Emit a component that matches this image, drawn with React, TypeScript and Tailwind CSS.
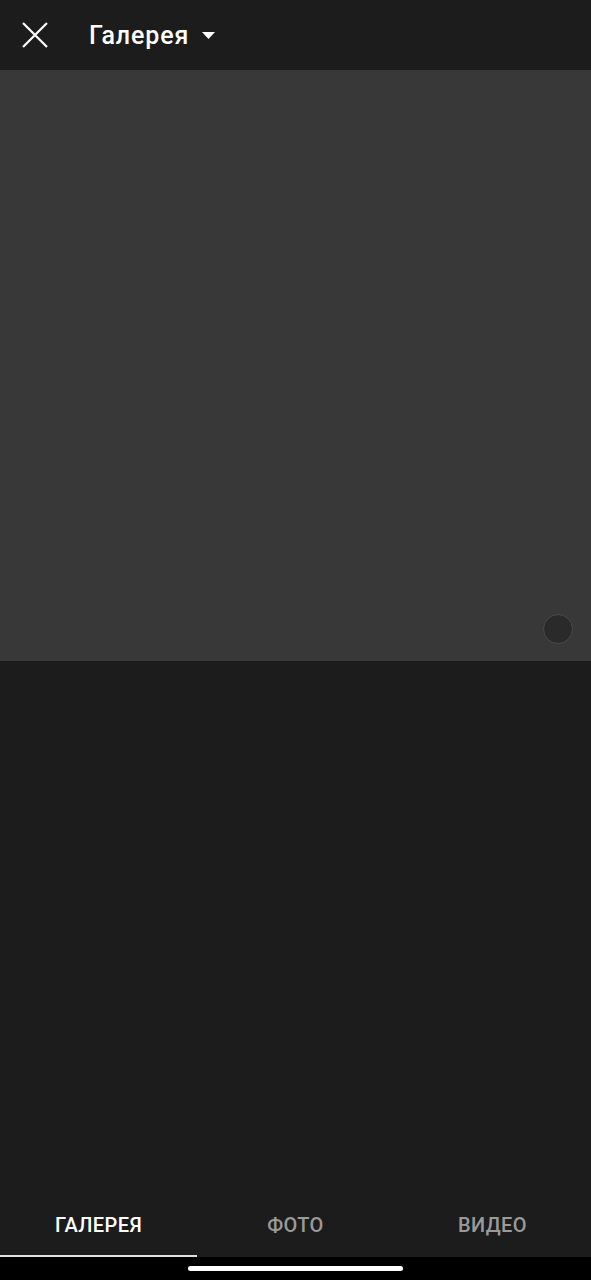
import React from 'react';

const tabs = ['ГАЛЕРЕЯ', 'ФОТО', 'ВИДЕО'];

export default function App() {
  return (
    <div className="flex h-[1280px] w-[591px] flex-col bg-[#1c1c1c] font-['Roboto',sans-serif]">
      {/* header */}
      <div className="flex h-[70px] shrink-0 items-center bg-[#1c1c1c]">
        <button className="ml-[21px] flex h-[28px] w-[28px] items-center justify-center">
          <svg width="28" height="28" viewBox="0 0 28 28" fill="none" stroke="#fff" strokeWidth="2.2">
            <path d="M2 2 L26 26 M26 2 L2 26" />
          </svg>
        </button>
        <div className="ml-[40px] flex items-center">
          <span className="text-[25px] font-medium leading-none tracking-[0.9px] text-white">Галерея</span>
          <svg className="ml-[13px]" width="13" height="7" viewBox="0 0 13 7">
            <path d="M0 0 H13 L6.5 7 Z" fill="#fff" />
          </svg>
        </div>
      </div>

      {/* preview */}
      <div className="relative h-[591px] shrink-0 bg-[#383838]">
        <div className="absolute left-[543px] top-[544px] h-[30px] w-[30px] rounded-full border border-[#4a4a4a] bg-[#2a2a2a]" />
      </div>

      <div className="flex-1" />

      {/* tabs */}
      <div className="grid h-[64px] shrink-0 grid-cols-3">
        {tabs.map((t, i) => (
          <div
            key={t}
            className={
              i === 0
                ? 'flex items-center justify-center border-b-2 border-[#e0e0e0] pt-[2px] text-[20px] font-medium tracking-[0.4px] text-white'
                : 'flex items-center justify-center border-b-2 border-transparent pt-[2px] text-[20px] font-medium tracking-[0.4px] text-[#9a9a9a]'
            }
          >
            {t}
          </div>
        ))}
      </div>

      {/* system nav */}
      <div className="flex h-[23px] shrink-0 items-start justify-center bg-black pt-[9px]">
        <div className="h-[5px] w-[215px] rounded-full bg-white" />
      </div>
    </div>
  );
}
